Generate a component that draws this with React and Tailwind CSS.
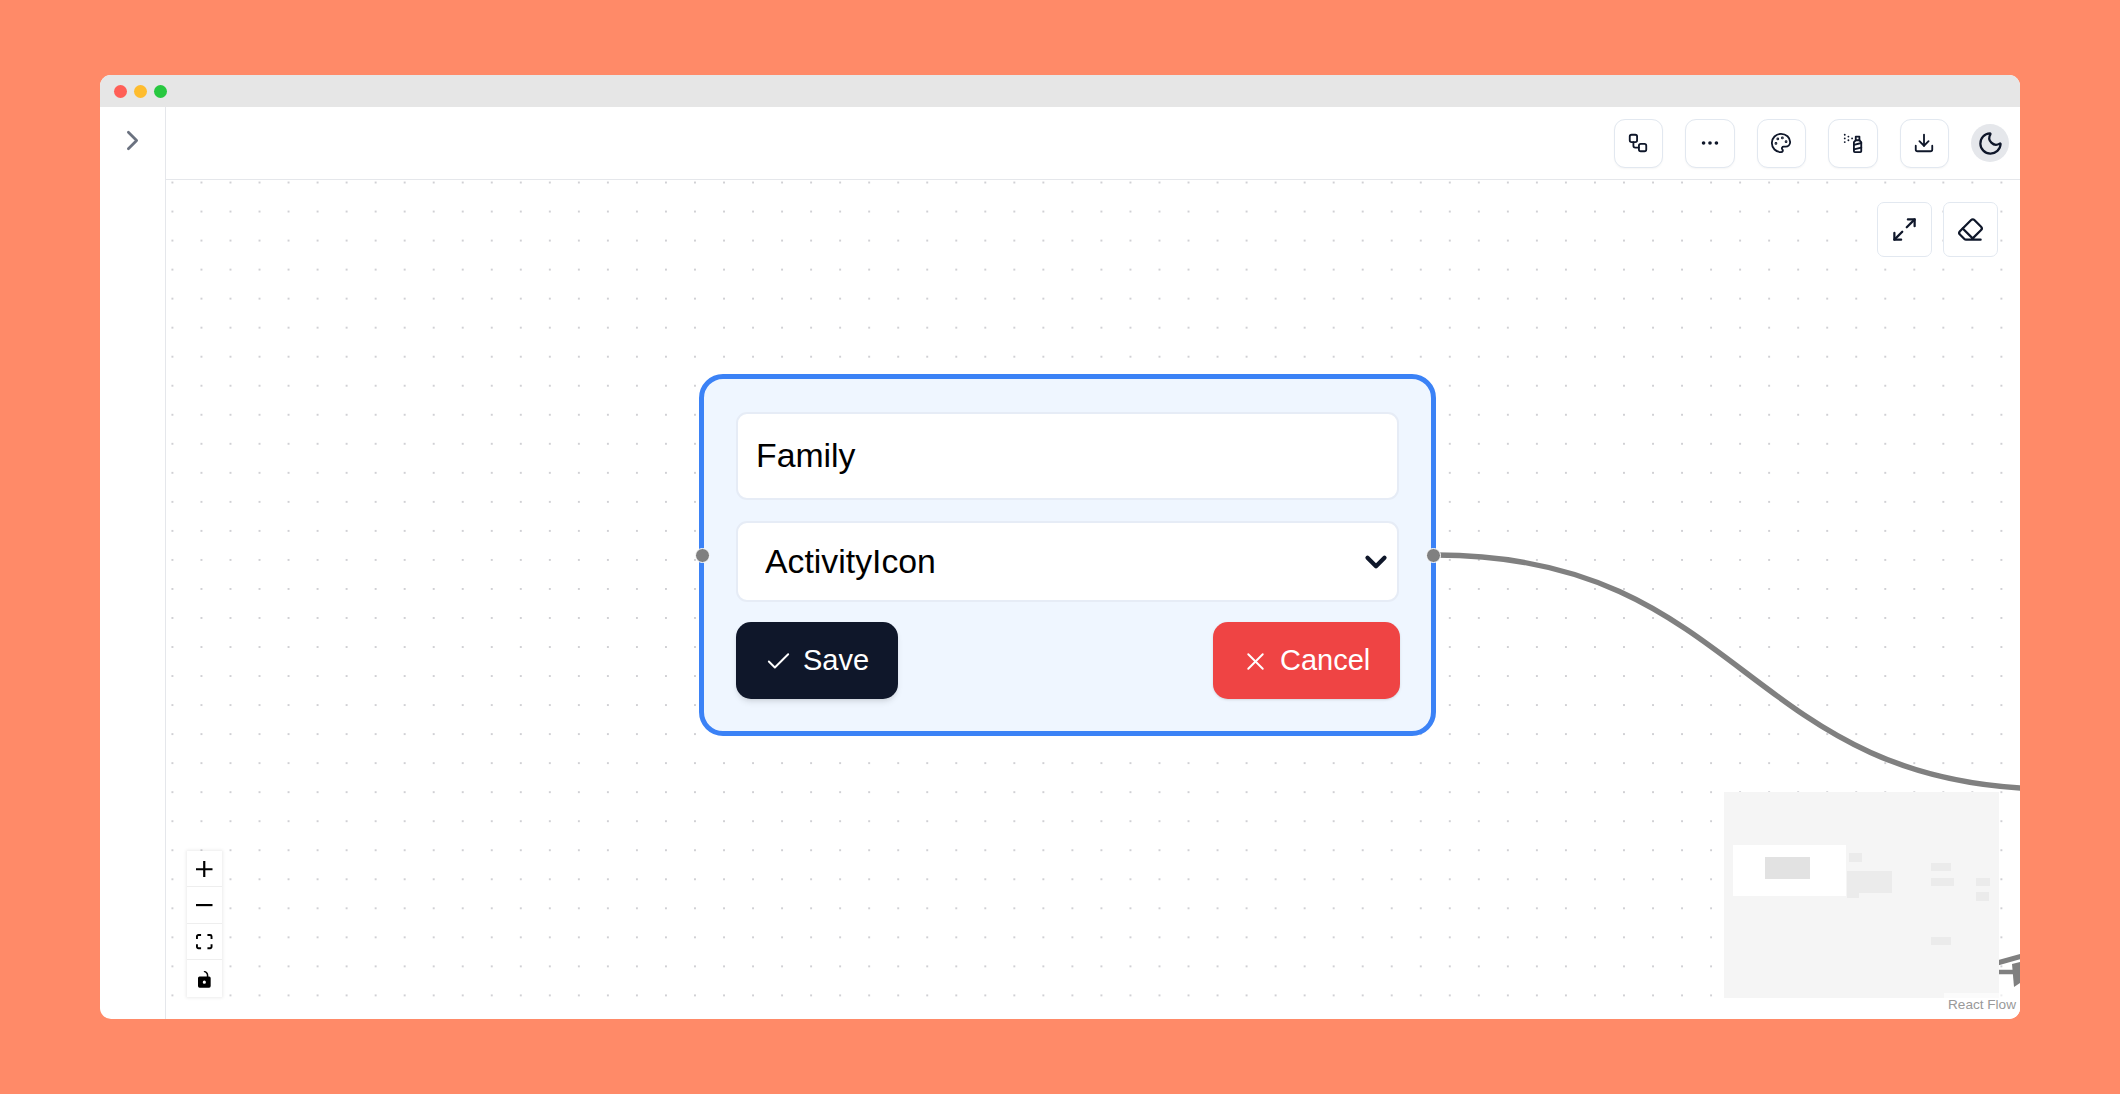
import { Check, ChevronDown, ChevronRight, Download, Ellipsis, Eraser, Maximize2, Moon, Palette, SprayCan, Workflow, X } from "lucide-react";

const toolbar = [Workflow, Ellipsis, Palette, SprayCan, Download];

const miniNodes = [
  ["1849", "853", "13", "9"],
  ["1847", "871", "45", "22"],
  ["1847", "893", "12", "5"],
  ["1931", "863", "20", "8"],
  ["1931", "878", "23", "8"],
  ["1976", "878", "14", "8"],
  ["1976", "892", "13", "9"],
  ["1931", "937", "20", "8"],
];

const ToolButton = ({ icon: Icon }) => (
  <button className="flex h-[49px] w-[49.5px] items-center justify-center rounded-[11px] border-[1.4px] border-[#e2e8f0] bg-white text-[#0f172a] shadow-[0_1px_2px_rgba(0,0,0,0.04)]">
    <Icon size={22} strokeWidth={2} />
  </button>
);

const CanvasButton = ({ icon: Icon }) => (
  <button className="flex h-[55px] w-[55px] items-center justify-center rounded-[7px] border-[1.4px] border-[#e2e8f0] bg-white text-[#0f172a]">
    <Icon size={27} strokeWidth={2} />
  </button>
);

const ControlButton = ({ children, last }) => (
  <button className={`flex h-[36.6px] w-full items-center justify-center bg-white pt-[1px] ${last ? "" : "border-b-[1.4px] border-[#eeeeee]"}`}>
    {children}
  </button>
);

const Handle = ({ side }) => (
  <span className={`absolute top-[168.5px] h-[15px] w-[15px] rounded-full border-[1.4px] border-white bg-[#808080] ${side}`} />
);

export default function App() {
  return (
    <div className="h-[1094px] w-[2120px] overflow-hidden bg-[#ff8a68] pl-[100px] pt-[75px] font-['Liberation_Sans',Arial,sans-serif]">
      <div className="flex h-[944px] w-[1920px] flex-col overflow-hidden rounded-[11px] bg-white">
        <div className="flex h-[32px] shrink-0 items-center gap-[7px] bg-[#e6e6e6] pl-[13.5px]">
          <span className="h-[13px] w-[13px] rounded-full bg-[#ff5f57]" />
          <span className="h-[13px] w-[13px] rounded-full bg-[#febc2e]" />
          <span className="h-[13px] w-[13px] rounded-full bg-[#28c840]" />
        </div>

        <div className="flex min-h-0 flex-1">
          <aside className="w-[66px] shrink-0 border-r-[1.4px] border-[#e5e7eb]">
            <button className="ml-[16px] mt-[17px] text-[#6b7280]">
              <ChevronRight size={33} strokeWidth={2} />
            </button>
          </aside>

          <main className="flex min-w-0 flex-1 flex-col">
            <header className="flex h-[73px] shrink-0 items-center justify-end gap-[22px] border-b-[1.4px] border-[#e5e7eb] pr-[11px]">
              {toolbar.map((icon, i) => (
                <ToolButton key={i} icon={icon} />
              ))}
              <button className="flex h-[38px] w-[38px] items-center justify-center rounded-full bg-[#e5e7eb] text-[#0f172a]">
                <Moon size={27} strokeWidth={2} />
              </button>
            </header>

            <div className="relative flex-1 overflow-hidden bg-white bg-[radial-gradient(circle,#d0d0d4_1.2px,transparent_1.3px)] bg-[length:29.04px_29.04px] bg-[position:-8.1px_-12px]">
              <svg className="absolute inset-0 h-full w-full" viewBox="166 180 1854 839" fill="none">
                <path d="M1436 555 C1745 555 1745 789 2054 789" stroke="#808080" strokeWidth="5.4" />
                <path d="M1990 965 L2022 956" stroke="#808080" strokeWidth="5" />
                <path d="M1990 972 L2017 972" stroke="#808080" strokeWidth="4.5" />
                <path d="M2012 964 L2014 987 L2020 983 L2020 962 Z" fill="#808080" />
              </svg>

              {/* node being edited */}
              <div className="absolute left-[533px] top-[194px] h-[362px] w-[737px] rounded-[24px] border-[5px] border-[#3b82f6] bg-[#eff6ff] px-[32px] pt-[32.5px]">
                <Handle side="left-[-9.5px]" />
                <Handle side="right-[-9.5px]" />
                <input
                  readOnly
                  value="Family"
                  className="h-[88px] w-full rounded-[11px] border-2 border-[#e6ecf6] bg-white pl-[18px] text-[33.8px] text-black outline-none"
                />
                <div className="relative mt-[21.5px]">
                  <select className="h-[81px] w-full appearance-none rounded-[11px] border-2 border-[#e6ecf6] bg-white pl-[27px] text-[33.8px] text-black outline-none">
                    <option>ActivityIcon</option>
                  </select>
                  <ChevronDown className="absolute right-[6px] top-[24px] text-[#0f172a]" size={34} strokeWidth={3} />
                </div>
                <div className="mt-[20px] flex justify-between">
                  <button className="flex h-[77px] w-[162px] items-center gap-[10px] rounded-[15px] bg-[#0f172a] pl-[28px] pt-[1px] text-[29px] text-white shadow-md">
                    <Check size={29} strokeWidth={1.6} />
                    Save
                  </button>
                  <button className="mr-[-1px] flex h-[77px] w-[187px] items-center gap-[10px] rounded-[15px] bg-[#ef4444] pl-[28px] pt-[1px] text-[29px] text-white shadow-sm">
                    <X size={29} strokeWidth={1.6} />
                    Cancel
                  </button>
                </div>
              </div>

              <div className="absolute right-[22px] top-[22px] flex gap-[11px]">
                <CanvasButton icon={Maximize2} />
                <CanvasButton icon={Eraser} />
              </div>

              {/* flow controls */}
              <div className="absolute bottom-[22px] left-[21px] flex w-[35px] flex-col shadow-[0_0_3px_1px_rgba(0,0,0,0.08)]">
                <ControlButton>
                  <svg className="w-[16.5px]" viewBox="0 0 32 32" fill="#000">
                    <path d="M32 18.133H18.133V32h-4.266V18.133H0v-4.266h13.867V0h4.266v13.867H32z" />
                  </svg>
                </ControlButton>
                <ControlButton>
                  <svg className="w-[16.5px]" viewBox="0 0 32 5" fill="#000">
                    <path d="M0 0h32v4.2H0z" />
                  </svg>
                </ControlButton>
                <ControlButton>
                  <svg className="w-[16.5px]" viewBox="0 0 32 30" fill="#000">
                    <path d="M3.692 4.63c0-.53.4-.938.939-.938h5.215V0H4.708C2.13 0 0 2.054 0 4.63v5.216h3.692V4.631zM27.354 0h-5.2v3.692h5.17c.53 0 .984.4.984.939v5.215H32V4.631A4.624 4.624 0 0027.354 0zm.954 24.83c0 .532-.4.94-.939.94h-5.215v3.768h5.215c2.577 0 4.631-2.13 4.631-4.707v-5.139h-3.692v5.139zm-23.677.94c-.531 0-.939-.4-.939-.94v-5.138H0v5.139c0 2.577 2.13 4.707 4.708 4.707h5.138V25.77H4.631z" />
                  </svg>
                </ControlButton>
                <ControlButton last>
                  <svg className="w-[13px]" viewBox="0 0 25 32" fill="#000">
                    <path d="M21.333 10.667H19.81V7.619C19.81 3.429 16.38 0 12.19 0c-1.828 0-1.37 2.133.305 2.438 1.676.305 4.42 2.59 4.42 5.181v3.048H3.047A3.056 3.056 0 000 13.714v15.238A3.056 3.056 0 003.048 32h18.285a3.056 3.056 0 003.048-3.048V13.714a3.056 3.056 0 00-3.048-3.047zM12.19 24.533a3.056 3.056 0 01-3.047-3.047 3.056 3.056 0 013.047-3.048 3.056 3.056 0 013.048 3.048 3.056 3.056 0 01-3.048 3.047z" />
                  </svg>
                </ControlButton>
              </div>

              {/* minimap */}
              <svg className="absolute bottom-[21px] right-[21px] h-[206px] w-[275px] bg-[#f5f5f5]" viewBox="1724 792 275 206">
                <rect x="1733" y="845" width="113" height="51" fill="#fff" />
                <rect x="1765" y="857" width="45" height="22" fill="#e2e2e2" />
                {miniNodes.map(([x, y, w, h], i) => (
                  <rect key={i} x={x} y={y} width={w} height={h} fill="#ebebeb" />
                ))}
              </svg>

              <div className="absolute bottom-0 right-0 h-[26px] bg-white/60 px-[4px] pt-[4px] text-[13.6px] leading-[16px] text-[#999999]">
                React Flow
              </div>
            </div>
          </main>
        </div>
      </div>
    </div>
  );
}
